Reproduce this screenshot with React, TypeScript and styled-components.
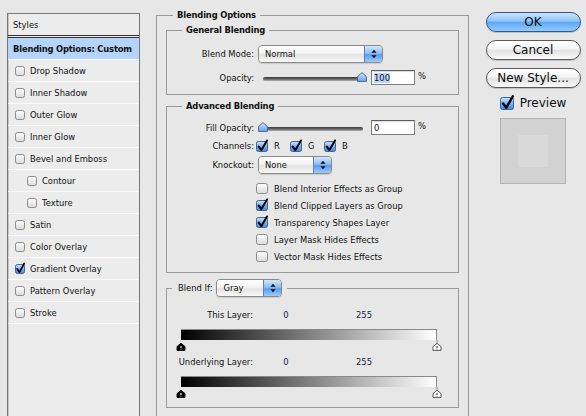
import React, { useId } from "react";
import styled, { createGlobalStyle } from "styled-components";

const GlobalStyle = createGlobalStyle`
  html, body { margin: 0; padding: 0; background: #e7e7e7; }
  #root { width: 586px; height: 416px; }
`;

const FONT = `"DejaVu Sans", "Noto Sans", sans-serif`;
const DIALOG_BG = "#e7e7e7";

const Window = styled.div`
  width: 586px;
  height: 416px;
  overflow: hidden;
  display: flex;
  align-items: flex-start;
  background: ${DIALOG_BG};
  font-family: ${FONT};
  font-size: 8.4px;
  line-height: 10px;
  color: #101010;
`;

/* ---------- Aqua check box ---------- */
const BoxSvg = styled.svg`
  flex: none;
  display: block;
  overflow: visible;
`;

function AquaCheck({ w, h, checked }: { w: number; h: number; checked?: boolean }) {
  const id = useId().replace(/:/g, "");
  return (
    <BoxSvg width={w} height={h} viewBox={`0 0 ${w} ${h}`}>
      <defs>
        <linearGradient id={`${id}u`} x1="0" y1="0" x2="0" y2="1">
          <stop offset="0" stopColor="#ffffff" />
          <stop offset="1" stopColor="#d9d9d9" />
        </linearGradient>
        <linearGradient id={`${id}c`} x1="0" y1="0" x2="0" y2="1">
          <stop offset="0" stopColor="#cfe4fc" />
          <stop offset="0.5" stopColor="#7fb1f1" />
          <stop offset="1" stopColor="#3d84e6" />
        </linearGradient>
      </defs>
      <rect
        x="0.5"
        y="0.5"
        width={w - 1}
        height={h - 1}
        rx="2"
        fill={`url(#${id}${checked ? "c" : "u"})`}
        stroke={checked ? "#40639a" : "#8c8c8c"}
      />
      {checked && (
        <path
          d={`M${w * 0.22} ${h * 0.5} L${w * 0.45} ${h * 0.82} L${w * 0.92} ${-h * 0.05}`}
          fill="none"
          stroke="#050505"
          strokeWidth={Math.max(1.7, w * 0.17)}
          strokeLinecap="round"
          strokeLinejoin="round"
        />
      )}
    </BoxSvg>
  );
}

/* ---------- Styles list (left) ---------- */
const StylesPanel = styled.div`
  flex: none;
  width: 133px;
  height: 440px;
  margin: 13px 0 0 7px;
  box-sizing: border-box;
  border: 1px solid #767676;
  box-shadow: inset 1px 0 0 #c6c6c6;
  background: #ececec;
`;

const PanelTitle = styled.div`
  height: 21px;
  display: flex;
  align-items: center;
  padding-left: 5px;
  border-bottom: 3px double #333;
`;

const StyleRow = styled.div<{ $indent?: number; $selected?: boolean }>`
  height: 22px;
  box-sizing: border-box;
  display: flex;
  align-items: center;
  gap: 5px;
  padding-left: ${(p) => (p.$selected ? 5 : 7 + (p.$indent ?? 0))}px;
  border-bottom: 1px solid #fbfbfb;
  background: ${(p) => (p.$selected ? "#b5d4fb" : "transparent")};
  font-weight: ${(p) => (p.$selected ? "bold" : "normal")};
  letter-spacing: ${(p) => (p.$selected ? "-0.18px" : "0")};
`;

const styleItems: { label: string; indent?: number; checked?: boolean }[] = [
  { label: "Drop Shadow" },
  { label: "Inner Shadow" },
  { label: "Outer Glow" },
  { label: "Inner Glow" },
  { label: "Bevel and Emboss" },
  { label: "Contour", indent: 12 },
  { label: "Texture", indent: 12 },
  { label: "Satin" },
  { label: "Color Overlay" },
  { label: "Gradient Overlay", checked: true },
  { label: "Pattern Overlay" },
  { label: "Stroke" },
];

/* ---------- Group boxes ---------- */
const OuterGroup = styled.div`
  flex: none;
  position: relative;
  width: 313px;
  margin: 15px 0 0 16px;
  box-sizing: border-box;
  border: 1px solid #9a9a9a;
  padding: 14px 9px 40px;
  display: flex;
  flex-direction: column;
`;

const Group = styled.div<{ $gapTop?: number }>`
  position: relative;
  border: 1px solid #9a9a9a;
  margin-top: ${(p) => p.$gapTop ?? 0}px;
  display: flex;
  flex-direction: column;
`;

const Caption = styled.div<{ $left: number }>`
  position: absolute;
  top: -6px;
  left: ${(p) => p.$left}px;
  padding: 0 4px;
  background: ${DIALOG_BG};
  font-weight: bold;
  letter-spacing: -0.15px;
  line-height: 10px;
`;

const GeneralBody = styled.div`
  padding: 14px 0 9px;
  display: flex;
  flex-direction: column;
  gap: 7px;
`;

const AdvancedBody = styled.div`
  padding: 13px 0 7px;
  display: flex;
  flex-direction: column;
`;

const Row = styled.div<{ $h: number; $top?: number }>`
  height: ${(p) => p.$h}px;
  margin-top: ${(p) => p.$top ?? 0}px;
  display: flex;
  align-items: center;
`;

const FieldLabel = styled.div`
  flex: none;
  width: 87px;
  margin-right: 4px;
  text-align: right;
`;

/* ---------- Pop-up menus ---------- */
const PopUp = styled.div<{ $w: number }>`
  flex: none;
  width: ${(p) => p.$w}px;
  height: 18px;
  box-sizing: border-box;
  display: flex;
  border: 1px solid #8a8a8a;
  border-radius: 4px;
  overflow: hidden;
  box-shadow: 0 1px 1px rgba(0, 0, 0, 0.12);
`;

const PopUpValue = styled.div`
  flex: 1;
  display: flex;
  align-items: center;
  padding-left: 6px;
  background: linear-gradient(#ffffff 0%, #f3f3f3 45%, #e3e3e3 55%, #f8f8f8 100%);
`;

const PopUpStepper = styled.div`
  flex: none;
  width: 17px;
  display: flex;
  align-items: center;
  justify-content: center;
  border-left: 1px solid #5d7fb8;
  background: linear-gradient(#d2e6fc 0%, #8ebdf4 45%, #5a9cf0 55%, #a0ccf9 100%);
`;

function Menu({ w, value }: { w: number; value: string }) {
  return (
    <PopUp $w={w}>
      <PopUpValue>{value}</PopUpValue>
      <PopUpStepper>
        <svg width="6" height="10" viewBox="0 0 6 10">
          <path d="M3 0.8 L5.6 3.8 H0.4 Z M3 9.2 L5.6 6.2 H0.4 Z" fill="#101010" />
        </svg>
      </PopUpStepper>
    </PopUp>
  );
}

/* ---------- Sliders & fields ---------- */
const SliderWrap = styled.div`
  position: relative;
  flex: none;
  width: 100px;
  height: 12px;
  margin-left: 5px;
`;

const Track = styled.div`
  position: absolute;
  left: 0;
  right: 0;
  top: 5px;
  height: 4px;
  border-radius: 2px;
  background: linear-gradient(#3a3a3a, #6a6a6a 55%, #b4b4b4);
`;

const ThumbSvg = styled.svg`
  position: absolute;
  top: 0;
`;

function Slider({ at }: { at: number }) {
  const id = useId().replace(/:/g, "");
  return (
    <SliderWrap>
      <Track />
      <ThumbSvg width="10" height="10" viewBox="0 0 10 10" style={{ left: at - 5 }}>
        <defs>
          <linearGradient id={id} x1="0" y1="0" x2="0" y2="1">
            <stop offset="0" stopColor="#d6e8fd" />
            <stop offset="1" stopColor="#6aa2ec" />
          </linearGradient>
        </defs>
        <path d="M5 0.6 L9.4 4.6 V9.4 H0.6 V4.6 Z" fill={`url(#${id})`} stroke="#45679c" />
      </ThumbSvg>
    </SliderWrap>
  );
}

const NumberField = styled.div`
  flex: none;
  width: 44px;
  height: 15px;
  box-sizing: border-box;
  margin-left: 8px;
  padding-left: 2px;
  display: flex;
  align-items: center;
  border: 1px solid #808080;
  border-top-color: #5e5e5e;
  background: #ffffff;
  box-shadow: inset 0 1px 1px rgba(0, 0, 0, 0.15);
`;

const Highlight = styled.span`
  background: #b5d5ff;
`;

const Unit = styled.span`
  margin-left: 3px;
  align-self: flex-start;
  margin-top: 1px;
`;

/* ---------- Channels & option list ---------- */
const Channels = styled.div`
  display: flex;
  margin-left: -2px;
`;

const Channel = styled.div`
  width: 34px;
  display: flex;
  align-items: center;
  gap: 6px;
`;

const OptionList = styled.div`
  margin: 6px 0 0 89px;
  display: flex;
  flex-direction: column;
`;

const OptionItem = styled.div`
  height: 17px;
  display: flex;
  align-items: center;
  gap: 6px;
`;

const options: { label: string; checked?: boolean }[] = [
  { label: "Blend Interior Effects as Group" },
  { label: "Blend Clipped Layers as Group", checked: true },
  { label: "Transparency Shapes Layer", checked: true },
  { label: "Layer Mask Hides Effects" },
  { label: "Vector Mask Hides Effects" },
];

/* ---------- Blend If ---------- */
const BlendIfBody = styled.div`
  padding: 20px 0 10px;
  display: flex;
  flex-direction: column;
`;

const BlendIfCaption = styled.div`
  position: absolute;
  top: -10px;
  left: 5px;
  padding: 0 5px 0 6px;
  display: flex;
  align-items: center;
  gap: 4px;
  background: ${DIALOG_BG};
`;

const RangeLabel = styled.div`
  flex: none;
  width: 86px;
  text-align: right;
`;

const LowValue = styled.div`
  flex: none;
  width: 8px;
  margin-left: 29px;
  text-align: center;
  color: #1b1b3a;
`;

const HighValue = styled.div`
  flex: none;
  margin-left: 66px;
  color: #1b1b3a;
`;

const RangeSlider = styled.div<{ $top: number }>`
  position: relative;
  flex: none;
  width: 256px;
  height: 21px;
  margin: ${(p) => p.$top}px 0 0 14px;
`;

const RangeBar = styled.div`
  height: 11px;
  box-sizing: border-box;
  border-top: 1px solid #8a8a8a;
  border-right: 1px solid #8a8a8a;
  background: linear-gradient(to right, #000000, #ffffff);
`;

const RangeThumbSvg = styled.svg`
  position: absolute;
  top: 11px;
`;

function RangeThumb({ x, light }: { x: number; light?: boolean }) {
  return (
    <RangeThumbSvg width="10" height="11" viewBox="0 0 10 11" style={{ left: x - 5 }}>
      {light && <path d="M5 0 V3.5" stroke="#8a8a8a" />}
      <path
        d="M5 3.3 L9 6.6 V10.4 H1 V6.6 Z"
        fill={light ? "#ffffff" : "#000000"}
        stroke={light ? "#444" : "#000"}
        strokeWidth="0.9"
      />
      <path d="M5 6 V8.2" stroke={light ? "#333" : "#ffffff"} strokeWidth="1.1" />
      <path d="M5 9 V9.6" stroke={light ? "#333" : "#ffffff"} strokeWidth="1.1" />
    </RangeThumbSvg>
  );
}

function GrayRange({ label, top }: { label: string; top: number }) {
  return (
    <>
      <Row $h={12} $top={top}>
        <RangeLabel>{label}</RangeLabel>
        <LowValue>0</LowValue>
        <HighValue>255</HighValue>
      </Row>
      <RangeSlider $top={8}>
        <RangeBar />
        <RangeThumb x={0} />
        <RangeThumb x={255.5} light />
      </RangeSlider>
    </>
  );
}

/* ---------- Buttons & preview (right) ---------- */
const Side = styled.div`
  flex: none;
  width: 96px;
  margin: 12px 0 0 16px;
  display: flex;
  flex-direction: column;
  align-items: center;
  gap: 8px;
`;

const PushButton = styled.div<{ $primary?: boolean }>`
  width: 95px;
  height: 20px;
  box-sizing: border-box;
  border-radius: 10px;
  display: flex;
  align-items: center;
  justify-content: center;
  font-size: 12px;
  line-height: 14px;
  color: #0a0a0a;
  border: 1px solid ${(p) => (p.$primary ? "#34568d" : "#5a5a5a")};
  background: ${(p) =>
    p.$primary
      ? "linear-gradient(#cbe4fd 0%, #8fc3f8 45%, #5ea7f3 52%, #92cdfb 100%)"
      : "linear-gradient(#ffffff 0%, #f4f4f4 45%, #e2e2e2 52%, #fafafa 100%)"};
  box-shadow: 0 1px 1px rgba(0, 0, 0, 0.18);
`;

const PreviewToggle = styled.div`
  height: 14px;
  display: flex;
  align-items: center;
  gap: 6px;
  font-size: 12px;
  line-height: 14px;
`;

const PreviewSwatch = styled.div`
  width: 66px;
  height: 66px;
  box-sizing: border-box;
  border: 1px solid #b3b3b3;
  background: #d2d2d2;
  display: flex;
  align-items: center;
  justify-content: center;
`;

const SwatchCore = styled.div`
  width: 30px;
  height: 32px;
  background: #d9d9d9;
`;

export default function App() {
  return (
    <>
      <GlobalStyle />
      <Window>
        <StylesPanel>
          <PanelTitle>Styles</PanelTitle>
          <StyleRow $selected>Blending Options: Custom</StyleRow>
          {styleItems.map((item) => (
            <StyleRow key={item.label} $indent={item.indent}>
              <AquaCheck w={10} h={10} checked={item.checked} />
              {item.label}
            </StyleRow>
          ))}
        </StylesPanel>

        <OuterGroup>
          <Caption $left={16}>Blending Options</Caption>

          <Group>
            <Caption $left={15}>General Blending</Caption>
            <GeneralBody>
              <Row $h={18}>
                <FieldLabel>Blend Mode:</FieldLabel>
                <Menu w={125} value="Normal" />
              </Row>
              <Row $h={15}>
                <FieldLabel>Opacity:</FieldLabel>
                <Slider at={99} />
                <NumberField>
                  <Highlight>100</Highlight>
                </NumberField>
                <Unit>%</Unit>
              </Row>
            </GeneralBody>
          </Group>

          <Group $gapTop={11}>
            <Caption $left={15}>Advanced Blending</Caption>
            <AdvancedBody>
              <Row $h={15}>
                <FieldLabel>Fill Opacity:</FieldLabel>
                <Slider at={0} />
                <NumberField>0</NumberField>
                <Unit>%</Unit>
              </Row>
              <Row $h={12} $top={5}>
                <FieldLabel>Channels:</FieldLabel>
                <Channels>
                  {["R", "G", "B"].map((c) => (
                    <Channel key={c}>
                      <AquaCheck w={12} h={11} checked />
                      {c}
                    </Channel>
                  ))}
                </Channels>
              </Row>
              <Row $h={18} $top={4}>
                <FieldLabel>Knockout:</FieldLabel>
                <Menu w={74} value="None" />
              </Row>
              <OptionList>
                {options.map((o) => (
                  <OptionItem key={o.label}>
                    <AquaCheck w={12} h={11} checked={o.checked} />
                    {o.label}
                  </OptionItem>
                ))}
              </OptionList>
            </AdvancedBody>
          </Group>

          <Group $gapTop={15}>
            <BlendIfCaption>
              <span>Blend If:</span>
              <Menu w={66} value="Gray" />
            </BlendIfCaption>
            <BlendIfBody>
              <GrayRange label="This Layer:" top={0} />
              <GrayRange label="Underlying Layer:" top={6} />
            </BlendIfBody>
          </Group>
        </OuterGroup>

        <Side>
          <PushButton $primary>OK</PushButton>
          <PushButton>Cancel</PushButton>
          <PushButton>New Style...</PushButton>
          <PreviewToggle>
            <AquaCheck w={14} h={13} checked />
            Preview
          </PreviewToggle>
          <PreviewSwatch>
            <SwatchCore />
          </PreviewSwatch>
        </Side>
      </Window>
    </>
  );
}
